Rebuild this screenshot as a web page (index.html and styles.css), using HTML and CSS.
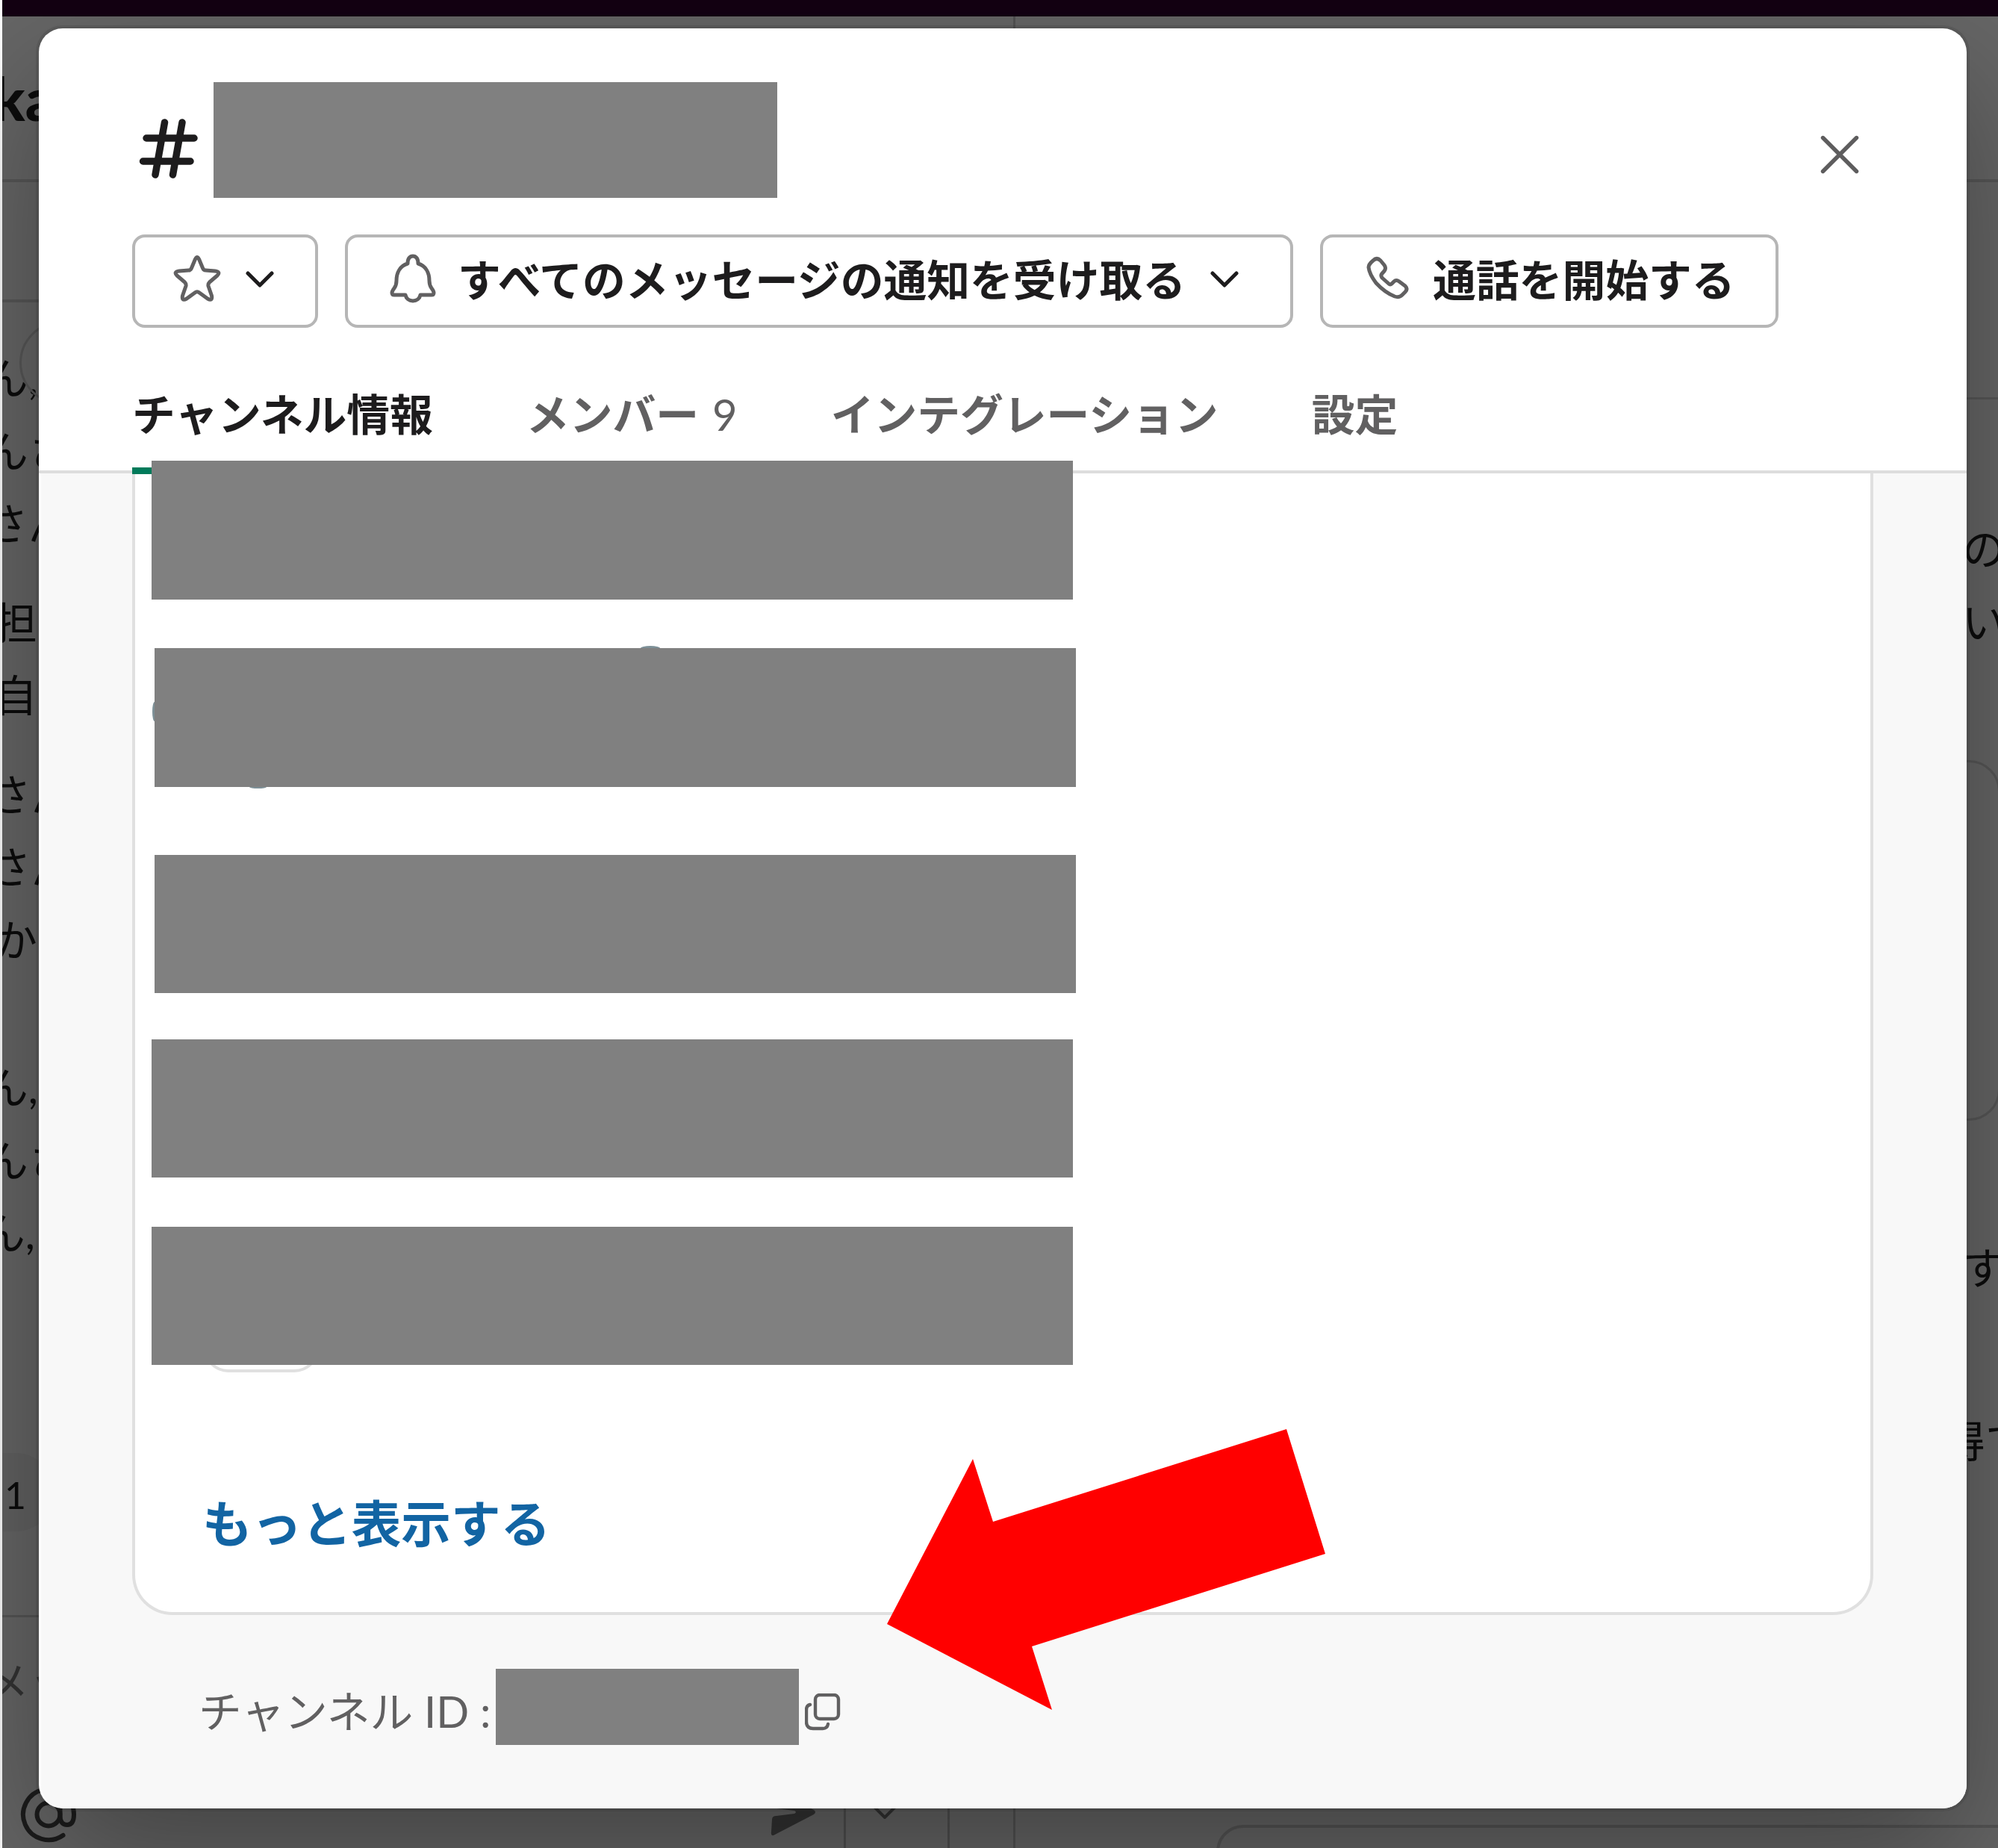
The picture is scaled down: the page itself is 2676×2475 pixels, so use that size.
FILE: index.html
```html
<!DOCTYPE html>
<html lang="ja">
<head>
<meta charset="utf-8">
<title>チャンネル情報</title>
<link rel="stylesheet" href="styles.css">
</head>
<body>
<div class="app">
  <div class="topbar"></div>
  <div class="workspace">
    <section class="pane pane-main">
      <header class="pane-title">ka</header>
      <div class="bookmarks"></div>
      <div class="messages">
        <p>ん,</p><p>んさ</p><p>さん</p>
        <p class="para outdent">担</p><p class="outdent">自</p>
        <p class="para shift">さん</p><p class="shift">さん</p><p class="outdent">か</p>
        <p class="block">ん,</p><p>んさ</p><p class="nudge">ん,</p>
        <span class="date-pill"></span>
      </div>
      <div class="reaction">1</div>
      <div class="composer">
        <p class="placeholder">メッ</p>
        <div class="tools">
          <svg class="at" width="76" height="76" viewBox="0 0 76 76"><circle cx="38" cy="38" r="15.500"/><path d="M53.500 22V40C53.500 48 57 52 63 52S72 47 72 38A34 34 0 1 0 57.500 66"/></svg>
          <svg class="send" width="62" height="64" viewBox="0 0 62 64"><path d="M2 2Q2 0 6 2L58 29Q62 32 58 35L4 63Q0 64 1 58L2 42Q2 37 8 37L32 34Q36 32 32 30L8 27Q2 27 2 22z"/></svg>
          <svg class="more" width="36" height="22" viewBox="0 0 36 22"><path d="M3 3l15 15L33 3"/></svg>
        </div>
      </div>
    </section>
    <section class="pane pane-thread">
      <header class="thread-title"></header>
      <div class="thread-sub"></div>
      <p class="t1">の</p><p class="t2">い</p>
      <div class="attachment"></div>
      <p class="t3">す</p><p class="t4">得て</p>
      <div class="thread-composer"></div>
    </section>
  </div>
</div>

<div class="dialog">
  <header class="dialog-head">
    <div class="title-row">
      <svg class="hash" width="80" height="80" viewBox="0 0 80 80"><path d="M34.500 5L22 75M58 5L45.500 75M10 26H74M5.500 57H69"/></svg>
      <span class="redacted name"></span>
      <svg class="close" width="52" height="52" viewBox="0 0 52 52"><path d="M3.500 3.500l45 45m0-45l-45 45"/></svg>
    </div>
    <div class="actions">
      <button class="btn star">
        <svg class="icon" width="62" height="62" viewBox="0 0 62 62"><path d="M28.500 5Q31 0 33.500 5L38.500 17Q39.500 20 42.500 20L55 21Q63 22 58 27L47.500 36Q45.500 38 46 41L50.500 54Q52 62 45 58L34 50Q31 47.500 28 50L17 58Q10 62 11.500 54L16 41Q16.500 38 14.500 36L4 27Q-1 22 7 21L19.500 20Q22.500 20 23.500 17z"/></svg>
        <svg class="chev" width="38" height="24" viewBox="0 0 38 24"><path d="M3 3l16 16L35 3"/></svg>
      </button>
      <button class="btn bell">
        <svg class="icon" width="60" height="64" viewBox="0 0 60 64"><path d="M23 12C23 5 26 2 30 2S37 5 37 12C47 15 52 24 52 35Q52 41 55 45Q58 49 58 51Q58 54 55 54H40C39 59 35 62 30 62S21 59 20 54H5Q2 54 2 51Q2 49 5 45Q8 41 8 35C8 24 13 15 23 12z"/></svg>
        <span>すべてのメッセージの通知を受け取る</span>
        <svg class="chev" width="38" height="24" viewBox="0 0 38 24"><path d="M3 3l16 16L35 3"/></svg>
      </button>
      <button class="btn call">
        <svg class="icon" width="56" height="56" viewBox="0 0 56 56"><path d="M8 5Q13 0 18 5L23 11Q26 15 23 19L19.500 23Q18 25 20 28L29 36Q31 38 33 36L36 33Q39 30 43 33L51 39Q55 43 51 47L47 51Q43 55 37 53Q24 48 12 35Q3 23 2 14Q2 10 8 5z"/></svg>
        <span>通話を開始する</span>
      </button>
    </div>
    <nav class="tabs">
      <span class="tab active">チャンネル情報</span>
      <span class="tab">メンバー <span class="count">9</span></span>
      <span class="tab">インテグレーション</span>
      <span class="tab">設定</span>
    </nav>
  </header>
  <div class="dialog-body">
    <div class="card">
      <div class="redacted row r1"></div>
      <div class="redacted row r2"><i class="dot dot-top"></i><i class="dot dot-left"></i><i class="dot dot-bottom"></i></div>
      <div class="redacted row r3"></div>
      <div class="redacted row r4"></div>
      <div class="chip-slot"><div class="redacted row r5"></div><div class="chip"></div></div>
      <a class="more-link">もっと表示する</a>
    </div>
    <div class="channel-id">
      <span>チャンネル ID :</span>
      <span class="redacted id"></span>
      <svg class="copy" width="48" height="50" viewBox="0 0 48 50"><rect x="14" y="2" width="31" height="32" rx="6"/><path d="M7 15Q2 16 2 22V38Q2 47 11 47H24Q30 47 31 41"/></svg>
    </div>
  </div>
</div>
<svg class="arrow" width="588" height="377" viewBox="0 0 588 377"><path d="M535 0L587 167L194 291L221 376L0 261L115 40L142 124z"/></svg>
</body>
</html>
```
FILE: styles.css
```css
* { box-sizing: border-box; }
body {
  margin: 0;
  width: 2676px;
  height: 2475px;
  position: relative;
  overflow: hidden;
  background: #fff;
  font-family: Lato, "Noto Sans CJK JP", sans-serif;
  font-size: 57.8px;
  color: #1d1c1d;
}
p { margin: 0; }
svg { flex: none; fill: none; stroke-linecap: round; stroke-linejoin: round; }

/* Dimmed workspace behind the dialog */
.app { margin-left: 3px; height: 2475px; display: flex; flex-direction: column; background: #666; overflow: hidden; }
.topbar { height: 22px; flex: none; background: #130112; }
.workspace { display: grid; grid-template-columns: 1357px 1fr; flex: 1; min-height: 0; }
.pane { overflow: hidden; color: #0c0c0c; white-space: nowrap; }
.pane-main { border-right: 3px solid #535353; }
.pane-title { height: 222px; text-indent: -13px; font-size: 80px; font-weight: 900; line-height: 219px; border-bottom: 4px solid #575757; }
.bookmarks { height: 161px; border-bottom: 4px solid #575757; }
.messages { position: relative; padding-top: 52px; line-height: 97.5px; text-indent: -23px; height: 1541px; }
.para { margin-top: 35px; }
.outdent { text-indent: -11px; }
.shift { text-indent: -19px; }
.nudge { text-indent: -27px; }
.block { margin-top: 100px; }
.date-pill { position: absolute; left: 23px; top: 25px; width: 500px; height: 112px; border: 3px solid #575757; border-radius: 56px; }
.reaction { width: 70px; height: 105px; padding-left: 3px; border-radius: 0 52px 52px 0; background: #626262; font-size: 50px; line-height: 112px; }
.composer { margin-top: 112px; border-top: 3px solid #555; height: 320px; }
.placeholder { line-height: 170px; height: 170px; padding-top: 2px; text-indent: -22px; color: #333; }
.tools { height: 130px; margin-top: 38px; position: relative; }
.at { position: absolute; left: 24px; top: 18px; stroke: #1c1c1c; stroke-width: 6; }
.send { fill: #333; position: absolute; left: 1029px; top: 21px; }
.more { position: absolute; left: 1164px; top: 42px; stroke: #333; stroke-width: 4; }
.tools::after { content: ""; position: absolute; left: 1127px; width: 136px; top: 0; height: 130px; border: solid #505050; border-width: 0 3px; }
.thread-title { height: 222px; border-bottom: 4px solid #575757; }
.thread-sub { height: 291px; border-bottom: 3px solid #575757; }
.pane-thread p { line-height: 98px; padding-left: 1268px; }
.pane-thread .t1 { margin-top: 151px; }
.attachment { height: 483px; margin-top: 136px; width: 1319px; border: 3px solid #575757; border-radius: 42px; }
.pane-thread .t3 { margin-top: 148px; }
.pane-thread .t4 { margin-top: 134px; padding-left: 1241px; }
.thread-composer { margin: 465px 0 0 269px; height: 100px; width: 1300px; border: 4px solid #555; border-radius: 36px; }

/* Dialog */
.dialog {
  position: absolute; left: 52px; top: 38px; width: 2582px; height: 2384px;
  display: flex; flex-direction: column;
  background: #fff; border-radius: 32px;
  box-shadow: 0 0 0 4px rgba(29, 28, 29, .13), 0 68px 182px rgba(0, 0, 0, .35);
}
.dialog-head { height: 596px; padding: 72px 0 0 125px; border-bottom: 4px solid #ddd; flex: none; }
.redacted { display: block; flex: none; background: #808080; }
.title-row { display: flex; height: 155px; align-items: flex-start; padding-left: 9px; }
.hash { margin-top: 49px; stroke: #1d1c1d; stroke-width: 9.5; }
.name { width: 755px; height: 155px; margin-left: 20px; }
.close { margin: 71px 0 0 1397px; stroke: #5e5d5e; stroke-width: 5.4; }
.actions { display: flex; gap: 36px; margin-top: 48.5px; height: 126px; }
.btn {
  display: flex; flex: none; align-items: center; height: 125px; padding: 0;
  border: 4px solid #b6b6b6; border-radius: 17px; background: #fff;
  font: 700 57.8px/1 Lato, "Noto Sans CJK JP", sans-serif; color: #1d1c1d; white-space: nowrap;
}
.btn span { margin-top: -2px; }
.icon { stroke: #616061; stroke-width: 5; overflow: visible; }
.chev { stroke: #1d1c1d; stroke-width: 5; margin-top: -3px; }
.star { width: 249px; padding-left: 52px; }
.star .icon { margin-top: -6px; }
.star .chev { margin-left: 34px; }
.bell { width: 1270px; padding-left: 57px; }
.bell .icon { margin: -6px 30px 0 0; }
.bell .chev { margin-left: 33px; }
.call { width: 614px; padding-left: 59px; }
.call .icon { margin: -8px 32px 0 0; }
.tabs { display: flex; gap: 125px; height: 194.5px; font-weight: 700; color: #616061; line-height: 229px; white-space: nowrap; }
.tab { position: relative; }
.active { color: #1d1c1d; }
.active::after { content: ""; position: absolute; left: 0; right: 0; top: 186px; height: 9px; background: #007a5a; }
.count { font-weight: 400; margin: 0 0 0 4px; }
.dialog-body { flex: 1; margin-left: 3px; padding-left: 122px; background: #f8f8f8; border-radius: 0 0 32px 32px; }
.card { width: 2332px; height: 1529px; border: 4px solid #e0e0e0; border-top: 0; border-radius: 0 0 54px 54px; background: #fff; display: flow-root; padding-left: 22px; }
.row { position: relative; width: 1234px; height: 185px; }
.r1 { margin-top: -17px; height: 186px; }
.r2 { margin: 65px 0 0 4px; height: 186px; }
.r3 { margin: 91px 0 0 4px; }
.r4 { margin-top: 62px; }
/* Avatar edges peeking out around the second row */
.dot { position: absolute; background: #7d9097; }
.dot-top { left: 651px; top: -3px; width: 26px; height: 3px; border-radius: 50% 50% 0 0 / 100% 100% 0 0; }
.dot-left { left: -3px; top: 72px; width: 3px; height: 26px; border-radius: 100% 0 0 100% / 50% 0 0 50%; }
.dot-bottom { left: 127px; bottom: -2px; width: 23px; height: 2px; border-radius: 0 0 50% 50% / 0 0 100% 100%; }
.chip-slot { position: relative; margin-top: 66px; height: 195px; }
.r5 { z-index: 1; }
.chip { position: absolute; left: 69px; bottom: 0; width: 156px; height: 76px; border: 4px solid #e0e0e0; border-radius: 34px; }
.more-link { display: block; margin: 148px 0 0 68px; font-size: 66.6px; line-height: 109px; font-weight: 700; color: #1264a3; }
.channel-id { display: flex; align-items: flex-start; margin-top: 72px; padding-left: 89px; line-height: 114px; color: #616061; white-space: pre; }
.channel-id > span:first-child { width: 398px; }
.id { width: 406px; height: 102px; }
.copy { margin: 33px 0 0 8px; stroke: #616061; stroke-width: 4.4; }

/* Callout arrow laid over the dialog */
.arrow { position: absolute; left: 1188px; top: 1914px; fill: #f00; }
```
